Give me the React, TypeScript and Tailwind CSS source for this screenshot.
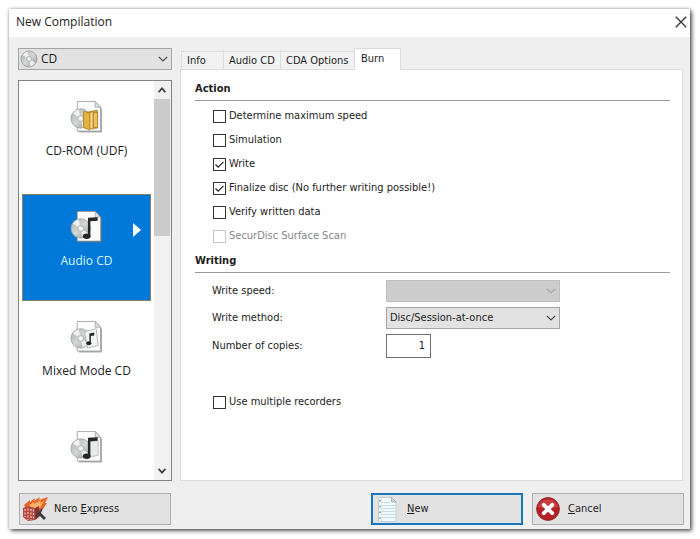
import { useState, type ReactNode } from "react";

type Artwork = "folder" | "note" | "mixed" | "copy";

const compilations: { id: string; label: string; art: Artwork; hideLabel?: boolean }[] = [
  { id: "udf", label: "CD-ROM (UDF)", art: "folder" },
  { id: "audio", label: "Audio CD", art: "note" },
  { id: "mixed", label: "Mixed Mode CD", art: "mixed" },
  { id: "extra", label: "CD EXTRA", art: "copy", hideLabel: true },
];

const actions = [
  { id: "max-speed", label: "Determine maximum speed" },
  { id: "simulation", label: "Simulation" },
  { id: "write", label: "Write", checked: true },
  { id: "finalize", label: "Finalize disc (No further writing possible!)", checked: true },
  { id: "verify", label: "Verify written data" },
  { id: "surface-scan", label: "SecurDisc Surface Scan", disabled: true },
];

const tabs = [
  { name: "Info", width: "w-[42px]" },
  { name: "Audio CD", width: "w-[57px]" },
  { name: "CDA Options", width: "w-[74px]" },
  { name: "Burn", width: "w-[47px]" },
];

function Chevron({ className = "" }: { className?: string }) {
  return (
    <svg viewBox="0 0 10 6" className={`h-[6px] w-[10px] ${className}`} fill="none" stroke="currentColor" strokeWidth="1.2">
      <path d="M0.8 0.8 5 5 9.2 0.8" />
    </svg>
  );
}

function Disc({ cx, cy, r }: { cx: number; cy: number; r: number }) {
  return (
    <g>
      <circle cx={cx} cy={cy} r={r} fill="url(#disc)" stroke="#9a9e9d" strokeWidth="0.8" />
      <path d={`M${cx} ${cy}L${cx - r * 0.8} ${cy - r * 0.5}A${r} ${r} 0 0 1 ${cx - r * 0.2} ${cy - r * 0.95}Z`} fill="#fff" opacity="0.75" />
      <path d={`M${cx} ${cy}L${cx + r * 0.8} ${cy + r * 0.5}A${r} ${r} 0 0 1 ${cx + r * 0.2} ${cy + r * 0.95}Z`} fill="#fff" opacity="0.75" />
      <circle cx={cx} cy={cy} r={r * 0.32} fill="#e3e6e5" stroke="#9fa4a2" strokeWidth="0.7" />
      <circle cx={cx} cy={cy} r={r * 0.12} fill="#fff" />
    </g>
  );
}

function CompilationIcon({ art }: { art: Artwork }) {
  return (
    <svg viewBox="0 0 34 34" className="h-[33px] w-[33px]">
      <path d="M9 3.5H28L33 9V33.5H9Z" fill="#777" opacity="0.6" />
      <path d="M7.5 1.5H26L31.5 7.5V32H7.5Z" fill="#fbfbfb" stroke="#959999" strokeWidth="0.8" />
      <path d="M26 1.5V7.5H31.5Z" fill="#dfe3e3" stroke="#959999" strokeWidth="0.7" />
      <Disc cx={11} cy={19} r={10} />
      {art === "folder" && (
        <g stroke="#a57a1c" strokeWidth="0.8">
          <path d="M18 12.5 28 10.5V29H18Z" fill="#d9a540" />
          <path d="M20 13 24 12 24 30 20 29Z" fill="#f9d987" />
          <path d="M14 11.5 20.5 13.5V31L14 28.5Z" fill="#e2b243" />
          <path d="M24 13H28.5V28.5H24Z" fill="#efbd64" />
        </g>
      )}
      {art === "mixed" && <path d="M15 12 27 9 29 26 18 29Z" fill="#f3f4f4" stroke="#a6aaaa" strokeWidth="0.8" />}
      {art === "copy" && <path d="M20 12 29 11 29 26 20 28Z" fill="#e9ebeb" stroke="#b4b8b8" strokeWidth="0.8" />}
      {art === "mixed" && (
        <g fill="#262626">
          <path d="M20 14 25 13V16L21.5 16.5V24H20Z" />
          <ellipse cx="19.4" cy="24" rx="2.6" ry="2" />
        </g>
      )}
      {(art === "note" || art === "copy") && (
        <g fill="#262626">
          <path d="M18.5 8 28.5 7.5V11L21 11.5V27H18.5Z" />
          <ellipse cx="17.2" cy="27" rx="4" ry="2.8" />
        </g>
      )}
    </svg>
  );
}

function NeroIcon() {
  return (
    <svg viewBox="0 0 27 26" className="h-[26px] w-[27px]">
      <path d="M2 9 8 4 8 6 13 2 12 5 18 1 17 4 26 1 23 7 25 7 21 13 17 16 4 13Z" fill="#ea6427" />
      <path d="M7 9 12 6 12 8 19 4 18 7 22 5 18 12 9 12Z" fill="#ffb067" />
      <path d="M1 12 6 10 13 12V24L6 25 1 21Z" fill="#b64941" />
      <path d="M13 12 17 10 18 20 13 24Z" fill="#7e3534" />
      <path d="M3 13V21M6 12.5V24M9 13V24M11.5 13.5V23" stroke="#efc7bd" strokeWidth="1.2" strokeDasharray="2 1.5" />
      <path d="M14 20 19 13 21 12 19 17 24 22 22 24 17 19 14 23Z" fill="#3f3b3c" />
    </svg>
  );
}

function NotepadIcon() {
  return (
    <svg viewBox="0 0 20 25" className="h-[25px] w-[20px]">
      <path d="M1.5 0.5H14.5L19 5V24.5H1.5Z" fill="#f2f9fb" stroke="#b9c6cd" strokeWidth="0.8" />
      <path d="M14.5 0.5V5H19Z" fill="#cfdbe1" stroke="#93a1aa" strokeWidth="0.7" />
      <path d="M5 5.5H13M5 8.5H18M5 11.5H18M5 14.5H18M5 17.5H18M5 20.5H18" stroke="#bcdbe7" strokeWidth="0.9" />
      <path d="M4.5 1V24" stroke="#c8d5da" strokeWidth="0.6" />
      <path d="M3 3V23" stroke="#8a7366" strokeWidth="1.4" strokeDasharray="1.4 4.4" />
    </svg>
  );
}

function CancelIcon() {
  return (
    <svg viewBox="0 0 24 24" className="h-6 w-6">
      <circle cx="12" cy="12" r="11.4" fill="#b51f26" stroke="#8f2a2d" strokeWidth="0.9" />
      <path d="M2 10A10.3 10.3 0 0 1 22 10Q12 14 2 10Z" fill="#d65a58" opacity="0.55" />
      <path d="M7.8 7.8 16.2 16.2M16.2 7.8 7.8 16.2" stroke="#fff" strokeWidth="3.8" strokeLinecap="round" />
    </svg>
  );
}

function CheckRow({ id, label, checked = false, disabled = false }: { id: string; label: string; checked?: boolean; disabled?: boolean }) {
  const [on, setOn] = useState(checked);

  return (
    <div className="flex h-6 items-center gap-[3px]">
      <span className="relative flex">
        <input
          id={id}
          type="checkbox"
          checked={on}
          disabled={disabled}
          onChange={(e) => setOn(e.target.checked)}
          className="h-[13px] w-[13px] appearance-none border border-[#333] bg-white disabled:border-[#c4c4c4]"
        />
        {on && (
          <svg viewBox="0 0 13 13" className="pointer-events-none absolute inset-0 h-[13px] w-[13px]" fill="none" stroke="#222" strokeWidth="1.2">
            <path d="M2.5 6.5 5.2 9.2 10.5 3.8" />
          </svg>
        )}
      </span>
      <label htmlFor={id} className={disabled ? "text-[#858585]" : ""}>
        {label}
      </label>
    </div>
  );
}

function SectionTitle({ children }: { children: ReactNode }) {
  return <h2 className="h-[20px] border-b border-[#999] font-bold">{children}</h2>;
}

export default function App() {
  const [selected, setSelected] = useState("audio");
  const [tab, setTab] = useState("Burn");

  return (
    <div className="bg-white pt-[9px] pr-[10px] pb-[11px] pl-[9px] font-['DejaVu_Sans_Condensed','DejaVu_Sans',sans-serif] text-[11px] leading-4 text-[#1c1c1c]">
      <main className="bg-[#efefef] shadow-[2px_2px_4px_rgba(0,0,0,0.6),0_0_3px_rgba(0,0,0,0.35)]">
        <header className="flex h-7 items-center justify-between bg-white pr-px pb-[3px] pl-[7px]">
          <h1 className="font-['Open_Sans','Noto_Sans',sans-serif] text-[12px]">New Compilation</h1>
          <button type="button" aria-label="Close" className="flex h-4 w-4 items-center justify-center">
            <svg viewBox="0 0 12 12" className="h-3 w-3" stroke="#333" strokeWidth="1.3">
              <path d="M0.8 0.8 11.2 11.2M11.2 0.8 0.8 11.2" />
            </svg>
          </button>
        </header>

        <div className="flex gap-2 pt-[11px] pr-[7px] pl-[9px]">
          <aside className="flex w-[154px] shrink-0 flex-col gap-[10px] font-['Open_Sans','Noto_Sans',sans-serif] text-[12px]">
            <div className="relative">
              <select aria-label="Disc type" className="block h-[22px] w-full appearance-none border border-[#a5a5a5] bg-[#e2e2e2] pl-[22px]">
                <option>CD</option>
              </select>
              <svg viewBox="0 0 18 18" className="pointer-events-none absolute top-[2px] left-[2px] h-[18px] w-[18px]">
                <Disc cx={9} cy={9} r={8} />
              </svg>
              <Chevron className="pointer-events-none absolute top-2 right-1 text-[#444]" />
            </div>

            <div className="flex h-[401px] border border-[#828282] bg-white">
              <ul className="flex-1 overflow-hidden pt-[3px] pl-[3px]">
                {compilations.map((item) => {
                  const active = item.id === selected;
                  return (
                    <li key={item.id} className="h-[110px]">
                      <button
                        type="button"
                        aria-label={item.label}
                        onClick={() => setSelected(item.id)}
                        className={`relative flex h-[107px] w-[129px] flex-col items-center gap-[10px] border pt-[15px] ${
                          active ? "border-[#8c7f63] bg-[#0078d7] text-[#d8f6ff]" : "border-transparent"
                        }`}
                      >
                        <CompilationIcon art={item.art} />
                        {!item.hideLabel && <span>{item.label}</span>}
                        {active && (
                          <svg viewBox="0 0 8 14" className="absolute top-[28px] right-[9px] h-[14px] w-2 fill-white">
                            <path d="M0 0 8 7 0 14Z" />
                          </svg>
                        )}
                      </button>
                    </li>
                  );
                })}
              </ul>
              <div className="flex w-[17px] flex-col bg-[#f1f1f1] pr-px">
                <button type="button" aria-label="Scroll up" className="flex h-[18px] items-center justify-center">
                  <svg viewBox="0 0 8 6" className="h-[6px] w-2" fill="none" stroke="#444" strokeWidth="1.8">
                    <path d="M0.6 5.2 4 1.4 7.4 5.2" />
                  </svg>
                </button>
                <div className="h-[137px] bg-[#cbcbcb]" />
                <button type="button" aria-label="Scroll down" className="mt-auto flex h-[18px] items-center justify-center">
                  <svg viewBox="0 0 8 6" className="h-[6px] w-2" fill="none" stroke="#444" strokeWidth="1.8">
                    <path d="M0.6 0.8 4 4.6 7.4 0.8" />
                  </svg>
                </button>
              </div>
            </div>
          </aside>

          <section className="flex min-w-0 flex-1 flex-col">
            <div role="tablist" className="flex h-[21px] items-end pl-px">
              {tabs.map(({ name, width }) => (
                <button
                  key={name}
                  type="button"
                  role="tab"
                  aria-selected={tab === name}
                  onClick={() => setTab(name)}
                  className={`border border-b-0 border-[#dcdcdc] text-left whitespace-nowrap ${width} ${
                    tab === name ? "relative -mb-px h-[22px] bg-white pb-[2px] pl-[6px]" : "h-[18px] border-r-0 bg-[#f2f2f2] pl-[5px]"
                  }`}
                >
                  {name}
                </button>
              ))}
            </div>

            <div role="tabpanel" aria-label={tab} className="flex-1 border border-[#dcdcdc] bg-white pt-[11px] pr-3 pl-[14px]">
              <SectionTitle>Action</SectionTitle>
              <div className="pt-[3px] pl-[18px]">
                {actions.map((action) => (
                  <CheckRow key={action.id} {...action} />
                ))}
              </div>

              <div className="pt-[5px]">
                <SectionTitle>Writing</SectionTitle>
              </div>
              <div className="grid grid-cols-[174px_1fr] items-center gap-y-[5px] pt-[7px] pl-[17px]">
                <label htmlFor="speed">Write speed:</label>
                <div className="relative w-[174px]">
                  <select id="speed" disabled className="block h-[22px] w-full appearance-none border border-[#bfbfbf] bg-[#cccccc]" />
                  <Chevron className="pointer-events-none absolute top-2 right-1 text-[#a6a6a6]" />
                </div>

                <label htmlFor="method">Write method:</label>
                <div className="relative w-[174px]">
                  <select id="method" className="block h-[22px] w-full appearance-none border border-[#a5a5a5] bg-[#e2e2e2] pl-[3px]">
                    <option>Disc/Session-at-once</option>
                    <option>Track-at-once</option>
                  </select>
                  <Chevron className="pointer-events-none absolute top-2 right-1 text-[#444]" />
                </div>

                <label htmlFor="copies">Number of copies:</label>
                <input id="copies" type="text" defaultValue="1" className="h-6 w-[45px] border border-[#6f6f6f] bg-white pr-[5px] pb-[2px] text-right" />
              </div>

              <div className="pt-8 pl-[18px]">
                <CheckRow id="recorders" label="Use multiple recorders" />
              </div>
            </div>
          </section>
        </div>

        <footer className="flex gap-[9px] pt-[12px] pr-[6px] pb-1 pl-[10px]">
          <button type="button" className="flex h-8 w-[152px] items-center gap-[5px] border border-[#adadad] bg-[#e2e2e2] pl-[2px]">
            <NeroIcon />
            <span>
              Nero <u>E</u>xpress
            </span>
          </button>
          <button type="button" className="ml-auto flex h-8 w-[152px] items-center gap-[10px] border-2 border-[#1b75bb] bg-[#e2e2e2] pl-1">
            <NotepadIcon />
            <span>
              <u>N</u>ew
            </span>
          </button>
          <button type="button" className="flex h-8 w-[152px] items-center gap-2 border border-[#adadad] bg-[#e2e2e2] pl-[3px]">
            <CancelIcon />
            <span>
              <u>C</u>ancel
            </span>
          </button>
        </footer>
      </main>

      <svg width="0" height="0" className="absolute" aria-hidden="true">
        <defs>
          <linearGradient id="disc" x1="0" y1="0" x2="1" y2="1">
            <stop offset="0" stopColor="#a9adab" />
            <stop offset="0.5" stopColor="#d4d8d6" />
            <stop offset="1" stopColor="#8e9391" />
          </linearGradient>
        </defs>
      </svg>
    </div>
  );
}
